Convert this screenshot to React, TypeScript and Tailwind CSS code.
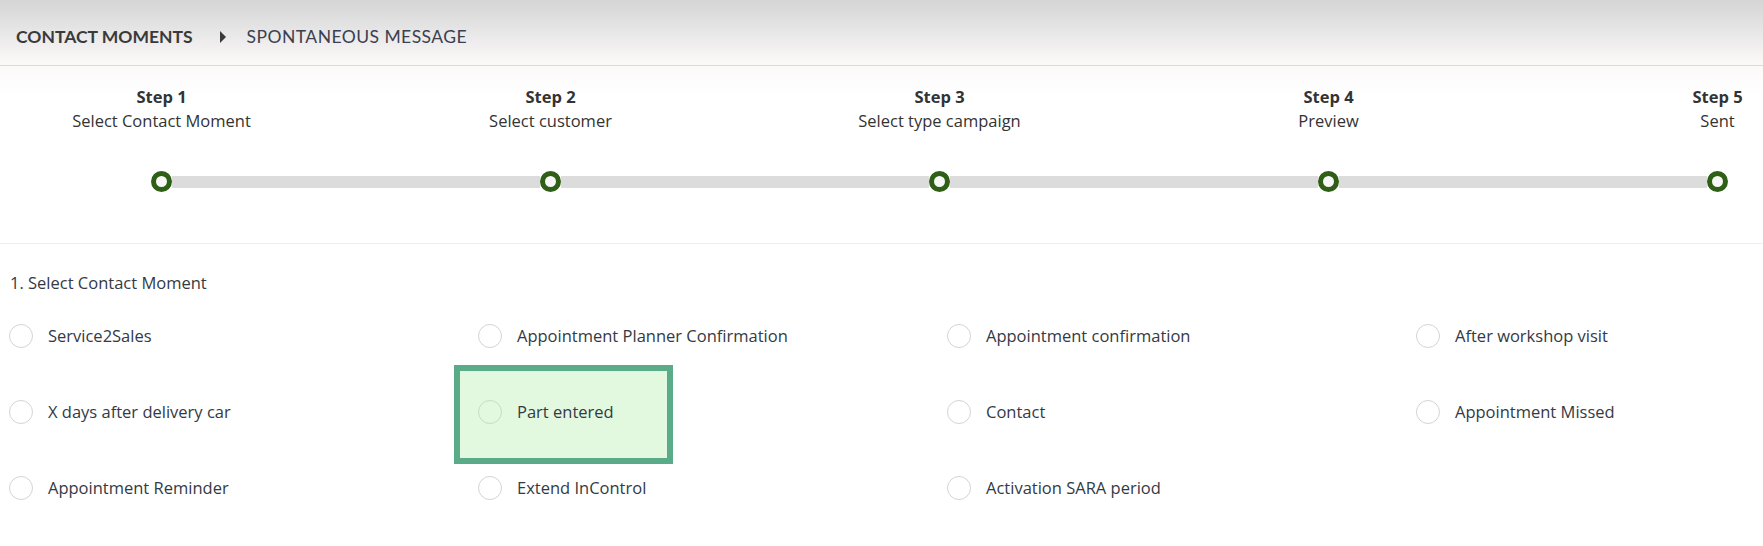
import React from "react"

const steps = [
  { title: "Step 1", label: "Select Contact Moment" },
  { title: "Step 2", label: "Select customer" },
  { title: "Step 3", label: "Select type campaign" },
  { title: "Step 4", label: "Preview" },
  { title: "Step 5", label: "Sent" },
]

const moments = [
  "Service2Sales",
  "Appointment Planner Confirmation",
  "Appointment confirmation",
  "After workshop visit",
  "X days after delivery car",
  "Part entered",
  "Contact",
  "Appointment Missed",
  "Appointment Reminder",
  "Extend InControl",
  "Activation SARA period",
]

function Dot() {
  return <div className="w-[21px] h-[21px] shrink-0 rounded-full border-[5px] border-[#2f5e17] bg-[#f7f7f7]" />
}

function Radio({ label, highlighted }: { label: string; highlighted?: boolean }) {
  return (
    <div className="relative h-[76px] flex items-center gap-[15px]">
      {highlighted && (
        // highlight frame drawn behind the option
        <div className="absolute left-[-24px] top-[-9px] w-[219px] h-[99px] border-[6px] border-[#5aab87] bg-[#e2f9df]" />
      )}
      <span
        className={`relative w-6 h-6 shrink-0 rounded-full border ${
          highlighted ? "border-[#c9d9c6] bg-transparent" : "border-[#d4d4d4] bg-white"
        }`}
      />
      <span className="relative text-[16.5px] leading-6 text-[#333a44] whitespace-nowrap">{label}</span>
    </div>
  )
}

export default function App() {
  return (
    <div className="w-full min-h-[546px] overflow-hidden bg-white font-['Open_Sans',sans-serif]">
      {/* Breadcrumb header */}
      <div className="h-[66px] flex items-center pl-4 pt-[9px] border-b border-[#dadada] bg-gradient-to-b from-[#d5d5d5] to-[#fcf9f9] font-['Lato',sans-serif] text-[17.5px]">
        <span className="font-bold text-[#3a3a3a]">CONTACT MOMENTS</span>
        <svg width="6" height="12" viewBox="0 0 6 12" className="ml-[27px] fill-[#3a3a3a]">
          <polygon points="0,0 6,6 0,12" />
        </svg>
        <span className="ml-[21px] text-[#3b4050] tracking-[0.45px]">SPONTANEOUS MESSAGE</span>
      </div>

      {/* Wizard steps */}
      <div className="pt-[19px] pb-[51px] border-b border-[#eeeeee] bg-gradient-to-b from-[#fcf9f9] to-white to-[30px]">
        <div className="pl-[151px] pr-[35px]">
          <div className="flex justify-between">
            {steps.map(s => (
              <div key={s.title} className="w-[21px] flex flex-col items-center">
                <div className="whitespace-nowrap text-center text-[16.5px] leading-6 text-[#333]">
                  <div className="font-bold">{s.title}</div>
                  <div>{s.label}</div>
                </div>
              </div>
            ))}
          </div>
          <div className="mt-[38px] flex items-center">
            {steps.map((s, i) => (
              <React.Fragment key={s.title}>
                {i > 0 && <div className="flex-1 h-3 bg-[#dcdcdc]" />}
                <Dot />
              </React.Fragment>
            ))}
          </div>
        </div>
      </div>

      {/* Contact moment choices */}
      <div className="pt-[27px] pl-[9px]">
        <div className="pl-px text-[16.5px] leading-6 text-[#333a44]">1. Select Contact Moment</div>
        <div className="mt-[3px] grid grid-cols-[repeat(4,469px)]">
          {moments.map(m => (
            <Radio key={m} label={m} highlighted={m === "Part entered"} />
          ))}
        </div>
      </div>
    </div>
  )
}
